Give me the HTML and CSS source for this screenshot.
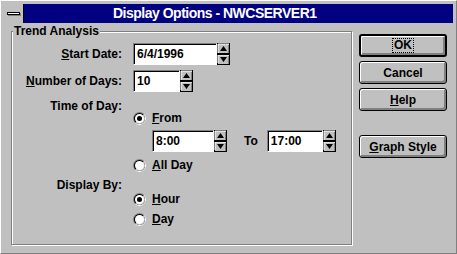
FILE: index.html
```html
<!DOCTYPE html>
<html lang="en">
<head>
    <meta charset="UTF-8">
    <title>Display Options - NWCSERVER1</title>
    <link rel="stylesheet" href="styles.css">
</head>
<body>
    <div class="dialog">
        <!-- title bar -->
        <div class="titlebar">
            <div class="sysmenu"><span class="sysmenu-bar"></span></div>
            <div class="caption">Display Options - NWCSERVER1</div>
        </div>

        <div class="dialog-body">
            <!-- Trend Analysis group -->
            <div class="group">
                <span class="group-title">Trend Analysis</span>

                <div class="row h-field">
                    <span class="field-label"><u>S</u>tart Date:</span>
                    <div class="textbox tb-date">6/4/1996</div>
                    <svg class="spinner" width="13" height="22" viewBox="0 0 13 22"><rect x="0.5" y="0.5" width="12" height="21" fill="#c0c0c0" stroke="#000"/><path d="M1 10V1h11M1 20v-8h11" stroke="#fff" fill="none"/><path d="M11.5 2v8M11.5 13v8" stroke="#808080"/><rect x="0" y="10" width="13" height="2" fill="#000"/><path d="M6.5 3L10 8H3z M3 14h7l-3.5 5z" fill="#000"/></svg>
                </div>

                <div class="row h-field mt-5">
                    <span class="field-label"><u>N</u>umber of Days:</span>
                    <div class="textbox tb-days">10</div>
                    <svg class="spinner" width="13" height="22" viewBox="0 0 13 22"><rect x="0.5" y="0.5" width="12" height="21" fill="#c0c0c0" stroke="#000"/><path d="M1 10V1h11M1 20v-8h11" stroke="#fff" fill="none"/><path d="M11.5 2v8M11.5 13v8" stroke="#808080"/><rect x="0" y="10" width="13" height="2" fill="#000"/><path d="M6.5 3L10 8H3z M3 14h7l-3.5 5z" fill="#000"/></svg>
                </div>

                <div class="row h-line mt-8">
                    <span class="field-label">Time of Day:</span>
                </div>

                <div class="row h-line">
                    <span class="field-label"></span>
                    <span class="radio">
                        <svg width="13" height="13" viewBox="0 0 13 13"><circle cx="6.5" cy="6.5" r="6.5" fill="#808080"/><path d="M11.1 1.9A6.5 6.5 0 0 1 1.9 11.1z" fill="#fff"/><circle cx="6.5" cy="6.5" r="5.5" fill="#000"/><path d="M10.4 2.6A5.5 5.5 0 0 1 2.6 10.4z" fill="#c0c0c0"/><circle cx="6.5" cy="6.5" r="4.5" fill="#fff"/><circle cx="6.5" cy="6.5" r="2.5" fill="#000"/></svg>
                        <span><u>F</u>rom</span>
                    </span>
                </div>

                <div class="row h-field mt-6">
                    <span class="field-label"></span>
                    <div class="textbox tb-from">8:00</div>
                    <svg class="spinner" width="13" height="22" viewBox="0 0 13 22"><rect x="0.5" y="0.5" width="12" height="21" fill="#c0c0c0" stroke="#000"/><path d="M1 10V1h11M1 20v-8h11" stroke="#fff" fill="none"/><path d="M11.5 2v8M11.5 13v8" stroke="#808080"/><rect x="0" y="10" width="13" height="2" fill="#000"/><path d="M6.5 3L10 8H3z M3 14h7l-3.5 5z" fill="#000"/></svg>
                    <span class="to-label">To</span>
                    <div class="textbox tb-to">17:00</div>
                    <svg class="spinner" width="13" height="22" viewBox="0 0 13 22"><rect x="0.5" y="0.5" width="12" height="21" fill="#c0c0c0" stroke="#000"/><path d="M1 10V1h11M1 20v-8h11" stroke="#fff" fill="none"/><path d="M11.5 2v8M11.5 13v8" stroke="#808080"/><rect x="0" y="10" width="13" height="2" fill="#000"/><path d="M6.5 3L10 8H3z M3 14h7l-3.5 5z" fill="#000"/></svg>
                </div>

                <div class="row h-line mt-7">
                    <span class="field-label"></span>
                    <span class="radio">
                        <svg width="13" height="13" viewBox="0 0 13 13"><circle cx="6.5" cy="6.5" r="6.5" fill="#808080"/><path d="M11.1 1.9A6.5 6.5 0 0 1 1.9 11.1z" fill="#fff"/><circle cx="6.5" cy="6.5" r="5.5" fill="#000"/><path d="M10.4 2.6A5.5 5.5 0 0 1 2.6 10.4z" fill="#c0c0c0"/><circle cx="6.5" cy="6.5" r="4.5" fill="#fff"/></svg>
                        <span><u>A</u>ll Day</span>
                    </span>
                </div>

                <div class="row h-line mt-8">
                    <span class="field-label">Display By:</span>
                </div>

                <div class="row h-line mt-2">
                    <span class="field-label"></span>
                    <span class="radio">
                        <svg width="13" height="13" viewBox="0 0 13 13"><circle cx="6.5" cy="6.5" r="6.5" fill="#808080"/><path d="M11.1 1.9A6.5 6.5 0 0 1 1.9 11.1z" fill="#fff"/><circle cx="6.5" cy="6.5" r="5.5" fill="#000"/><path d="M10.4 2.6A5.5 5.5 0 0 1 2.6 10.4z" fill="#c0c0c0"/><circle cx="6.5" cy="6.5" r="4.5" fill="#fff"/><circle cx="6.5" cy="6.5" r="2.5" fill="#000"/></svg>
                        <span><u>H</u>our</span>
                    </span>
                </div>

                <div class="row h-line mt-8">
                    <span class="field-label"></span>
                    <span class="radio">
                        <svg width="13" height="13" viewBox="0 0 13 13"><circle cx="6.5" cy="6.5" r="6.5" fill="#808080"/><path d="M11.1 1.9A6.5 6.5 0 0 1 1.9 11.1z" fill="#fff"/><circle cx="6.5" cy="6.5" r="5.5" fill="#000"/><path d="M10.4 2.6A5.5 5.5 0 0 1 2.6 10.4z" fill="#c0c0c0"/><circle cx="6.5" cy="6.5" r="4.5" fill="#fff"/></svg>
                        <span><u>D</u>ay</span>
                    </span>
                </div>
            </div>

            <!-- buttons -->
            <div class="buttons">
                <button class="btn btn-default"><span class="focus-ring">OK</span></button>
                <button class="btn">Cancel</button>
                <button class="btn"><u>H</u>elp</button>
                <button class="btn btn-spaced"><u>G</u>raph Style</button>
            </div>
        </div>
    </div>
</body>
</html>
```

FILE: styles.css
```css
:root {
    --face: #c0c0c0;
    --shadow: #808080;
    --navy: #000080;
}

body {
    margin: 0;
    background: var(--face);
    font-family: "Liberation Sans", Arial, sans-serif;
    font-size: 12px;
    font-weight: bold;
    color: #000;
}

.dialog {
    width: 457px;
    height: 254px;
    box-sizing: border-box;
    border: 1px solid;
    border-color: #fff var(--shadow) var(--shadow) #fff;
    padding: 3px;
    background: var(--face);
}

/* title bar */
.titlebar {
    display: flex;
    height: 19px;
}

.sysmenu {
    width: 19px;
    border-right: 1px solid #000;
    display: flex;
    align-items: center;
    justify-content: center;
}

.sysmenu-bar {
    width: 11px;
    height: 1px;
    background: #fff;
    border: 1px solid #000;
    box-shadow: 1px 1px 0 var(--shadow);
}

.caption {
    flex: 1;
    background: var(--navy);
    color: #fff;
    font-size: 14px;
    letter-spacing: -0.5px;
    line-height: 19px;
    padding-left: 89px;
    white-space: nowrap;
}

/* body */
.dialog-body {
    display: flex;
    gap: 7px;
    padding: 8px 0 0 7px;
}

.group {
    position: relative;
    width: 341px;
    height: 214px;
    box-sizing: border-box;
    border: 1px solid var(--shadow);
    box-shadow: inset 1px 1px 0 #fff, 1px 1px 0 #fff;
    padding-top: 11px;
}

.group-title {
    position: absolute;
    top: -8px;
    left: 1px;
    padding: 0 1px;
    line-height: 14px;
    background: var(--face);
}

.row {
    display: flex;
    align-items: center;
}

.h-field { height: 22px; }
.h-line { height: 12px; }
.mt-2 { margin-top: 2px; }
.mt-5 { margin-top: 5px; }
.mt-6 { margin-top: 6px; }
.mt-7 { margin-top: 7px; }
.mt-8 { margin-top: 8px; }

.field-label {
    flex: none;
    width: 110px;
    margin-right: 11px;
    text-align: right;
}

.textbox {
    height: 22px;
    box-sizing: border-box;
    background: #fff;
    border: 1px solid;
    border-color: var(--shadow) #fff #fff var(--shadow);
    box-shadow: inset 1px 1px 0 #000;
    padding-left: 3px;
    line-height: 21px;
}

.tb-date { width: 84px; }
.tb-days { width: 47px; }
.tb-from { width: 62px; margin-left: 19px; }
.tb-to { width: 56px; }

.spinner {
    flex: none;
    display: block;
}

.to-label {
    margin: 0 9px 0 17px;
}

.radio {
    display: flex;
    align-items: center;
    gap: 6px;
}

.radio svg {
    display: block;
}

/* buttons */
.buttons {
    display: flex;
    flex-direction: column;
    gap: 4px;
    padding-top: 3px;
}

.btn {
    width: 88px;
    height: 23px;
    box-sizing: border-box;
    padding: 0;
    border: 1px solid #000;
    border-radius: 3px;
    background: var(--face);
    box-shadow: inset 1px 1px 0 #fff, inset -2px -2px 0 var(--shadow);
    font: inherit;
    color: #000;
    display: flex;
    align-items: center;
    justify-content: center;
}

.btn-default {
    border-width: 2px;
}

.btn-spaced {
    margin-top: 20px;
}

.focus-ring {
    outline: 1px dotted #000;
    padding: 0 1px;
    line-height: 13px;
}
```
